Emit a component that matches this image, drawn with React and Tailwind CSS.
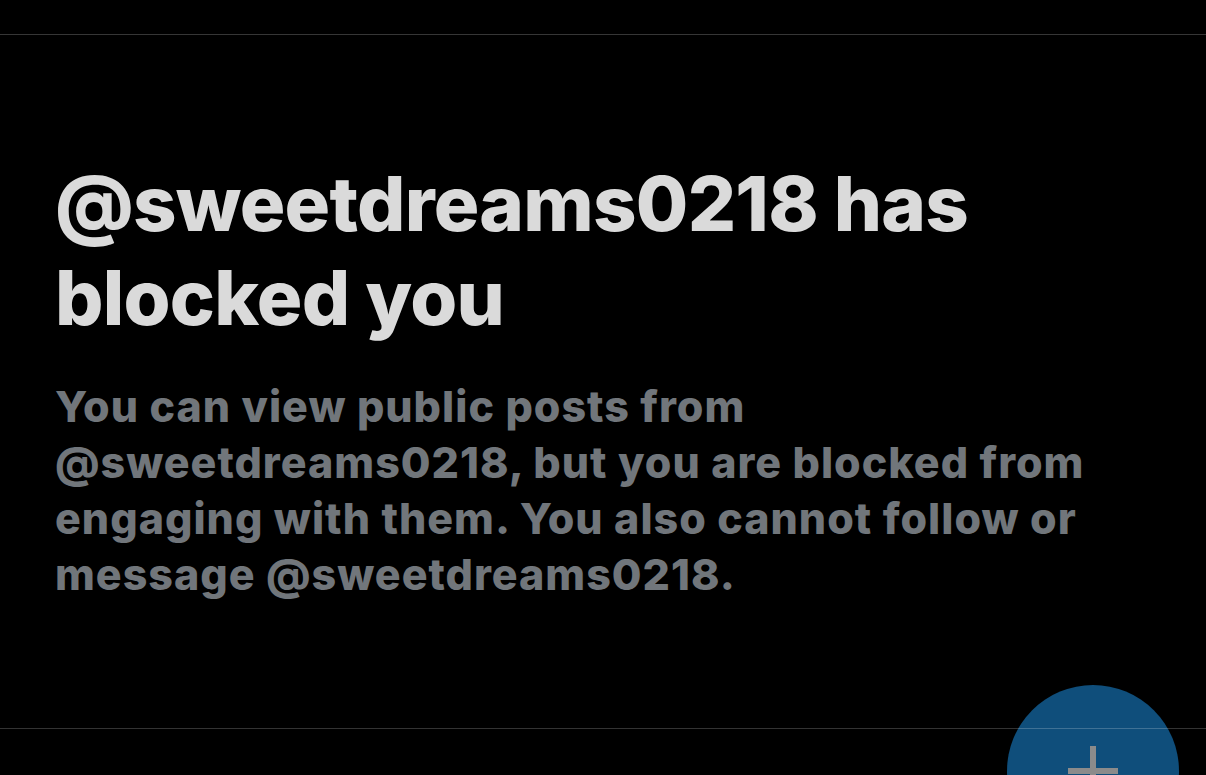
import React from "react";

const HANDLE = "@sweetdreams0218";

// Floating compose button, sits over the bottom divider
const ComposeFab = () => (
  <button className="absolute left-[1007px] top-[685px] z-0 flex h-[172px] w-[172px] items-start justify-center rounded-full bg-[#0f4e7b]">
    <svg className="mt-[61px]" width="50" height="50" viewBox="0 0 50 50">
      <rect x="22" y="0" width="6" height="50" fill="#8b8b8b" />
      <rect x="0" y="22" width="50" height="6" fill="#8b8b8b" />
    </svg>
  </button>
);

const App = () => {
  return (
    <div className="relative flex h-[775px] w-full flex-col overflow-hidden bg-black font-['Inter','Liberation_Sans',Arial,sans-serif]">
      {/* top header divider */}
      <div className="h-[35px] shrink-0 border-b border-[#363636]" />

      {/* blocked notice */}
      <main className="flex-1 px-[55px] pt-[121px]">
        <h1 className="text-[76px] font-extrabold leading-[94px] tracking-[-0.01em] text-[#dadada]">
          {HANDLE} has
          <br />
          blocked you
        </h1>
        <p className="mt-[34px] text-[43px] font-extrabold leading-[56px] tracking-[1px] text-[#71767b]">
          You can view public posts from
          <br />
          {HANDLE}, but you are blocked from
          <br />
          engaging with them. You also cannot follow or
          <br />
          message {HANDLE}.
        </p>
      </main>

      <ComposeFab />

      {/* bottom bar divider, drawn over the button */}
      <div className="relative z-10 h-[47px] shrink-0 border-t border-white/20" />
    </div>
  );
};

export default App;
